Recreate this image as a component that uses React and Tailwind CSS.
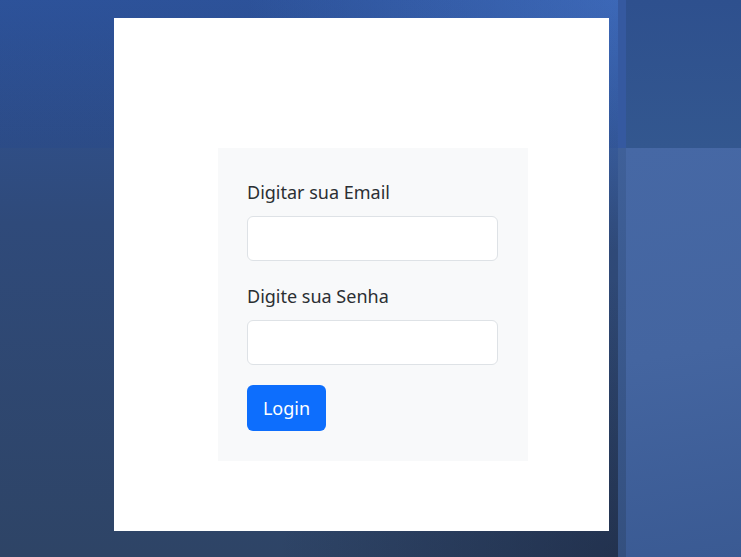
export default function App() {
  return (
    <div className="flex w-[741px] h-[557px] overflow-hidden font-['Noto_Sans',sans-serif]">
      <div className="w-[618px] h-full pl-[114px] pt-[18px] bg-[linear-gradient(to_bottom,rgba(20,60,150,0.12)_0_148px,transparent_148px),radial-gradient(ellipse_60%_45%_at_100%_0%,rgba(80,130,215,0.55),transparent),radial-gradient(ellipse_55%_50%_at_100%_100%,rgba(20,28,50,0.45),transparent),linear-gradient(to_bottom,#30559a,#2f4a7a_40%,#2e4466)]">
        <div className="w-[495px] h-[513px] bg-white pl-[104px] pt-[130px]">
          <div className="w-[310px] bg-[#f8f9fa] pl-[29px] pr-[30px] pt-[30px] pb-[30px]">
            <label className="block text-[18px] leading-[28px] text-[#2b2f33] mb-[10px]">Digitar sua Email</label>
            <div className="h-[45px] w-[251px] bg-white border border-[#dee2e6] rounded-[6px] mb-[21px]"></div>
            <label className="block text-[18px] leading-[28px] text-[#2b2f33] mb-[10px]">Digite sua Senha</label>
            <div className="h-[45px] w-[251px] bg-white border border-[#dee2e6] rounded-[6px] mb-[20px]"></div>
            <button className="w-[79px] h-[46px] bg-[#0d6efd] text-white text-[18px] rounded-[6px]">Login</button>
          </div>
        </div>
      </div>
      <div className="flex-1 flex flex-col">
        <div className="h-[148px] flex bg-[linear-gradient(to_bottom,#2e508e,#33578f)]">
          <div className="w-[8px] bg-[#3559a0]"></div>
        </div>
        <div className="flex-1 flex bg-[linear-gradient(170deg,#4668a5,#4465a0_50%,#3a5a93)]">
          <div className="w-[8px] bg-[linear-gradient(to_bottom,#3f6099,#34507f)]"></div>
        </div>
      </div>
    </div>
  );
}
